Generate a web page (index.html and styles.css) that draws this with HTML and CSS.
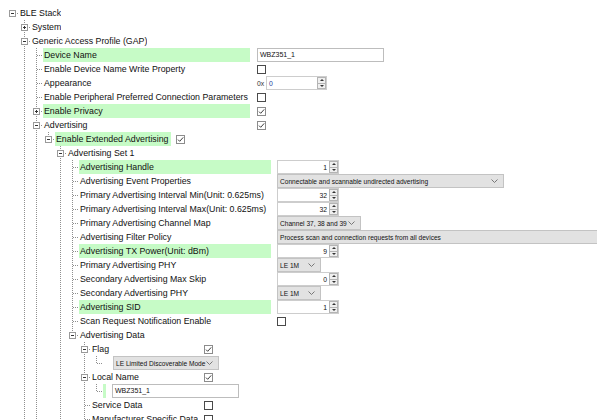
FILE: index.html
```html
<!DOCTYPE html>
<html lang="en">
<head>
    <meta charset="UTF-8">
    <title>BLE Stack Configuration</title>
    <link rel="stylesheet" href="styles.css">
</head>
<body>
<div class="tree">
    <!-- root -->
    <div class="row"><i class="c r"><b class="ex"></b></i><span class="lbl">BLE Stack</span></div>
    <div class="row"><i class="c"></i><i class="c t"><b class="ex plus"></b></i><span class="lbl">System</span></div>
    <div class="row"><i class="c"></i><i class="c t"><b class="ex"></b></i><span class="lbl">Generic Access Profile (GAP)</span></div>

    <!-- GAP -->
    <div class="row"><i class="c"></i><i class="c g"></i><i class="c t"></i>
        <span class="lbl w-gap hl">Device Name</span>
        <span class="txt w-name">WBZ351_1</span>
    </div>
    <div class="row"><i class="c"></i><i class="c g"></i><i class="c t"></i>
        <span class="lbl w-gap">Enable Device Name Write Property</span>
        <span class="chk"></span>
    </div>
    <div class="row"><i class="c"></i><i class="c g"></i><i class="c t"></i>
        <span class="lbl w-gap">Appearance</span>
        <span class="hex">0x</span>
        <span class="spin w-app"><span class="val left">0</span><span class="arr"><i class="up"></i><i class="dn"></i></span></span>
    </div>
    <div class="row"><i class="c"></i><i class="c g"></i><i class="c t"></i>
        <span class="lbl w-gap">Enable Peripheral Preferred Connection Parameters</span>
        <span class="chk"></span>
    </div>
    <div class="row"><i class="c"></i><i class="c g"></i><i class="c t"><b class="ex plus"></b></i>
        <span class="lbl w-gap hl">Enable Privacy</span>
        <span class="chk on"><svg width="9" height="9" viewBox="0 0 9 9"><path d="M2 4.6 3.7 6.3 7.2 2.4" fill="none" stroke="#3c3c3c"/></svg></span>
    </div>
    <div class="row"><i class="c"></i><i class="c g"></i><i class="c t"><b class="ex"></b></i>
        <span class="lbl w-gap">Advertising</span>
        <span class="chk on"><svg width="9" height="9" viewBox="0 0 9 9"><path d="M2 4.6 3.7 6.3 7.2 2.4" fill="none" stroke="#3c3c3c"/></svg></span>
    </div>

    <!-- Advertising -->
    <div class="row"><i class="c"></i><i class="c g"></i><i class="c g"></i><i class="c l"><b class="ex"></b></i>
        <span class="lbl w-ext hl">Enable Extended Advertising</span>
        <span class="chk on"><svg width="9" height="9" viewBox="0 0 9 9"><path d="M2 4.6 3.7 6.3 7.2 2.4" fill="none" stroke="#3c3c3c"/></svg></span>
    </div>
    <div class="row"><i class="c"></i><i class="c g"></i><i class="c g"></i><i class="c"></i><i class="c t"><b class="ex"></b></i>
        <span class="lbl">Advertising Set 1</span>
    </div>

    <!-- Advertising Set 1 -->
    <div class="row"><i class="c"></i><i class="c g"></i><i class="c g"></i><i class="c"></i><i class="c g"></i><i class="c t"></i>
        <span class="lbl w-set hl">Advertising Handle</span>
        <span class="spin w-num"><span class="val">1</span><span class="arr"><i class="up"></i><i class="dn"></i></span></span>
    </div>
    <div class="row"><i class="c"></i><i class="c g"></i><i class="c g"></i><i class="c"></i><i class="c g"></i><i class="c t"></i>
        <span class="lbl w-set">Advertising Event Properties</span>
        <span class="combo w-evt">Connectable and scannable undirected advertising<svg class="chev" width="7" height="4" viewBox="0 0 7 4"><path d="M.5.5 3.5 3.5 6.5.5" fill="none" stroke="#777"/></svg></span>
    </div>
    <div class="row"><i class="c"></i><i class="c g"></i><i class="c g"></i><i class="c"></i><i class="c g"></i><i class="c t"></i>
        <span class="lbl w-set">Primary Advertising Interval Min(Unit: 0.625ms)</span>
        <span class="spin w-num"><span class="val">32</span><span class="arr"><i class="up"></i><i class="dn"></i></span></span>
    </div>
    <div class="row"><i class="c"></i><i class="c g"></i><i class="c g"></i><i class="c"></i><i class="c g"></i><i class="c t"></i>
        <span class="lbl w-set">Primary Advertising Interval Max(Unit: 0.625ms)</span>
        <span class="spin w-num"><span class="val">32</span><span class="arr"><i class="up"></i><i class="dn"></i></span></span>
    </div>
    <div class="row"><i class="c"></i><i class="c g"></i><i class="c g"></i><i class="c"></i><i class="c g"></i><i class="c t"></i>
        <span class="lbl w-set">Primary Advertising Channel Map</span>
        <span class="combo w-chan">Channel 37, 38 and 39<svg class="chev" width="7" height="4" viewBox="0 0 7 4"><path d="M.5.5 3.5 3.5 6.5.5" fill="none" stroke="#777"/></svg></span>
    </div>
    <div class="row"><i class="c"></i><i class="c g"></i><i class="c g"></i><i class="c"></i><i class="c g"></i><i class="c t"></i>
        <span class="lbl w-set">Advertising Filter Policy</span>
        <span class="combo w-filter">Process scan and connection requests from all devices</span>
    </div>
    <div class="row"><i class="c"></i><i class="c g"></i><i class="c g"></i><i class="c"></i><i class="c g"></i><i class="c t"></i>
        <span class="lbl w-set hl">Advertising TX Power(Unit: dBm)</span>
        <span class="spin w-num"><span class="val">9</span><span class="arr"><i class="up"></i><i class="dn"></i></span></span>
    </div>
    <div class="row"><i class="c"></i><i class="c g"></i><i class="c g"></i><i class="c"></i><i class="c g"></i><i class="c t"></i>
        <span class="lbl w-set">Primary Advertising PHY</span>
        <span class="combo w-phy">LE 1M<svg class="chev" width="7" height="4" viewBox="0 0 7 4"><path d="M.5.5 3.5 3.5 6.5.5" fill="none" stroke="#777"/></svg></span>
    </div>
    <div class="row"><i class="c"></i><i class="c g"></i><i class="c g"></i><i class="c"></i><i class="c g"></i><i class="c t"></i>
        <span class="lbl w-set">Secondary Advertising Max Skip</span>
        <span class="spin w-num"><span class="val">0</span><span class="arr"><i class="up"></i><i class="dn"></i></span></span>
    </div>
    <div class="row"><i class="c"></i><i class="c g"></i><i class="c g"></i><i class="c"></i><i class="c g"></i><i class="c t"></i>
        <span class="lbl w-set">Secondary Advertising PHY</span>
        <span class="combo w-phy">LE 1M<svg class="chev" width="7" height="4" viewBox="0 0 7 4"><path d="M.5.5 3.5 3.5 6.5.5" fill="none" stroke="#777"/></svg></span>
    </div>
    <div class="row"><i class="c"></i><i class="c g"></i><i class="c g"></i><i class="c"></i><i class="c g"></i><i class="c t"></i>
        <span class="lbl w-set hl">Advertising SID</span>
        <span class="spin w-num"><span class="val">1</span><span class="arr"><i class="up"></i><i class="dn"></i></span></span>
    </div>
    <div class="row"><i class="c"></i><i class="c g"></i><i class="c g"></i><i class="c"></i><i class="c g"></i><i class="c t"></i>
        <span class="lbl w-set">Scan Request Notification Enable</span>
        <span class="chk"></span>
    </div>

    <!-- Advertising Data -->
    <div class="row"><i class="c"></i><i class="c g"></i><i class="c g"></i><i class="c"></i><i class="c g"></i><i class="c l"><b class="ex"></b></i>
        <span class="lbl">Advertising Data</span>
    </div>
    <div class="row"><i class="c"></i><i class="c g"></i><i class="c g"></i><i class="c"></i><i class="c g"></i><i class="c"></i><i class="c t"><b class="ex"></b></i>
        <span class="lbl w-data">Flag</span>
        <span class="chk on"><svg width="9" height="9" viewBox="0 0 9 9"><path d="M2 4.6 3.7 6.3 7.2 2.4" fill="none" stroke="#3c3c3c"/></svg></span>
    </div>
    <div class="row"><i class="c"></i><i class="c g"></i><i class="c g"></i><i class="c"></i><i class="c g"></i><i class="c"></i><i class="c g"></i><i class="c l"></i>
        <span class="lbl w-val"></span>
        <span class="combo w-flag">LE Limited Discoverable Mode<svg class="chev" width="7" height="4" viewBox="0 0 7 4"><path d="M.5.5 3.5 3.5 6.5.5" fill="none" stroke="#777"/></svg></span>
    </div>
    <div class="row"><i class="c"></i><i class="c g"></i><i class="c g"></i><i class="c"></i><i class="c g"></i><i class="c"></i><i class="c t"><b class="ex"></b></i>
        <span class="lbl w-data">Local Name</span>
        <span class="chk on"><svg width="9" height="9" viewBox="0 0 9 9"><path d="M2 4.6 3.7 6.3 7.2 2.4" fill="none" stroke="#3c3c3c"/></svg></span>
    </div>
    <div class="row"><i class="c"></i><i class="c g"></i><i class="c g"></i><i class="c"></i><i class="c g"></i><i class="c"></i><i class="c g"></i><i class="c l"></i>
        <span class="lbl w-val hl"></span>
        <span class="txt w-local">WBZ351_1</span>
    </div>
    <div class="row"><i class="c"></i><i class="c g"></i><i class="c g"></i><i class="c"></i><i class="c g"></i><i class="c"></i><i class="c t"></i>
        <span class="lbl w-data">Service Data</span>
        <span class="chk"></span>
    </div>
    <div class="row"><i class="c"></i><i class="c g"></i><i class="c g"></i><i class="c"></i><i class="c g"></i><i class="c"></i><i class="c t"></i>
        <span class="lbl w-data">Manufacturer Specific Data</span>
        <span class="chk"></span>
    </div>
</div>
</body>
</html>
```

FILE: styles.css
```css
:root {
    --dash-v: repeating-linear-gradient(to bottom, #8f8f8f 0 1px, transparent 1px 2px);
    --dash-h: repeating-linear-gradient(to right, #8f8f8f 0 1px, transparent 1px 2px);
}
* {
    box-sizing: border-box;
}
html, body {
    margin: 0;
    height: 100%;
    overflow: hidden;
    background: #fff;
}
body {
    font-family: "Liberation Sans", Arial, sans-serif;
    font-size: 8.8px;
    color: #111;
}
.tree {
    padding: 6px 0 0 6px;
}
.row {
    display: flex;
    align-items: center;
    height: 14px;
    white-space: nowrap;
}

/* tree lines */
.c {
    flex: none;
    display: block;
    width: 12px;
    height: 14px;
}
.c.g {
    background: var(--dash-v) 6px 0 / 1px 14px no-repeat;
}
.c.t {
    background: var(--dash-v) 6px 0 / 1px 14px no-repeat,
                var(--dash-h) 7px 7px / 5px 1px no-repeat;
}
.c.l {
    background: var(--dash-v) 6px 0 / 1px 7px no-repeat,
                var(--dash-h) 7px 7px / 5px 1px no-repeat;
}
.c.r {
    background: var(--dash-h) 7px 7px / 5px 1px no-repeat;
}
.ex {
    display: block;
    width: 7px;
    height: 7px;
    margin: 4px 0 0 3px;
    border: 1px solid #9a9a9a;
    background: linear-gradient(#333, #333) center / 3px 1px no-repeat, #fff;
}
.ex.plus {
    background: linear-gradient(#333, #333) center / 3px 1px no-repeat,
                linear-gradient(#333, #333) center / 1px 3px no-repeat, #fff;
}

/* labels */
.lbl {
    flex: none;
    height: 14px;
    line-height: 14px;
    margin-left: 1px;
    padding-left: 1px;
    overflow: hidden;
}
.hl {
    background: #c6fbc6;
}
.w-gap  { width: 207px; margin-right: 7px; }
.w-set  { width: 192px; margin-right: 6px; }
.w-ext  { width: 116px; margin-right: 5px; }
.w-data { width: 107px; margin-right: 6px; }
.w-val  { width: 3px;   margin-right: 6px; }

/* editors */
.chk {
    flex: none;
    width: 9px;
    height: 9px;
    border: 1px solid #4a4a4a;
    background: #fff;
}
.chk.on {
    border-color: #8c8c8c;
}
.chk svg {
    display: block;
    margin: -1px;
}
.txt {
    flex: none;
    height: 14px;
    padding: 0 2px;
    border: 1px solid #bdbdbd;
    background: #fff;
    font-size: 7px;
    line-height: 12px;
    color: #111;
}
.w-name  { width: 127px; }
.w-local { width: 127px; }
.hex {
    font-size: 6.8px;
    width: 9px;
    color: #333;
}
.spin {
    flex: none;
    display: flex;
    align-items: center;
    height: 14px;
    border: 1px solid #cdcdcd;
    background: #fff;
    font-size: 6.8px;
}
.w-num { width: 62px; }
.w-app { width: 61px; }
.spin .val {
    flex: 1;
    text-align: right;
    padding-right: 2px;
}
.spin .val.left {
    text-align: left;
    padding-left: 2px;
    color: #1f3c9a;
}
.arr {
    flex: none;
    display: flex;
    flex-direction: column;
    width: 9px;
    height: 12px;
}
.arr i {
    flex: 1;
    display: flex;
    align-items: center;
    justify-content: center;
    border: 1px solid #b4b4b4;
    background: #efefef;
}
.arr i + i {
    border-top: none;
}
.arr .up::before {
    content: "";
    border-left: 2px solid transparent;
    border-right: 2px solid transparent;
    border-bottom: 2px solid #333;
}
.arr .dn::before {
    content: "";
    border-left: 2px solid transparent;
    border-right: 2px solid transparent;
    border-top: 2px solid #333;
}
.combo {
    flex: none;
    display: flex;
    align-items: center;
    height: 14px;
    padding-left: 2px;
    border: 1px solid #c3c3c3;
    background: #e2e2e2;
    font-size: 6.6px;
    color: #111;
}
.chev {
    flex: none;
    margin-left: auto;
    margin-right: 5px;
}
.w-evt    { width: 227px; }
.w-chan   { width: 84px; }
.w-filter { width: 330px; }
.w-phy    { width: 44px; }
.w-flag   { width: 106px; margin-left: 1px; }
```
